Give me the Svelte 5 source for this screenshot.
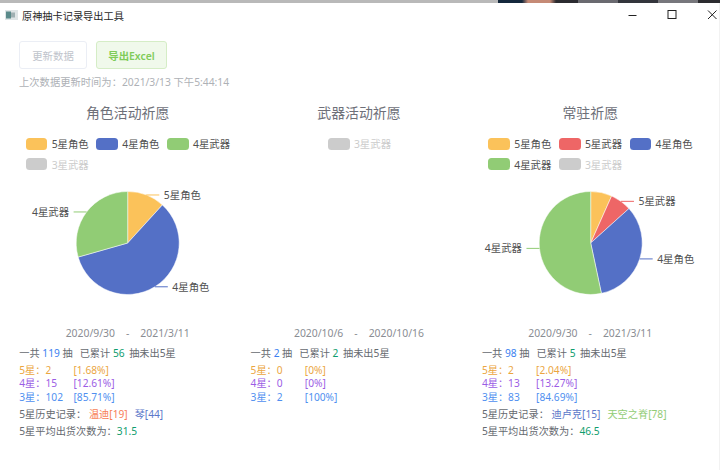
<script>
  const YELLOW = "#fbc25a";
  const RED = "#ee6666";
  const BLUE = "#5470c6";
  const GREEN = "#91cc75";
  const GRAY = "#cccccc";

  const CX = 115.7;
  const CY = 68;
  const R = 51.5;

  const point = (deg, r = R) => {
    const a = (deg * Math.PI) / 180;
    return [CX + r * Math.sin(a), CY - r * Math.cos(a)];
  };

  // turn counts into pie wedges + labels
  const slices = (items) => {
    const total = items.reduce((sum, i) => sum + i.value, 0);
    let from = 0;
    return items.map((item) => {
      const to = from + (item.value / total) * 360;
      const [x1, y1] = point(from);
      const [x2, y2] = point(to);
      const [ex, ey] = point((from + to) / 2);
      const dir = ex >= CX ? 1 : -1;
      const large = to - from > 180 ? 1 : 0;
      from = to;
      return {
        ...item,
        d: `M${CX} ${CY}L${x1} ${y1}A${R} ${R} 0 ${large} 1 ${x2} ${y2}Z`,
        line: `M${ex} ${ey}H${ex + dir * 13}`,
        tx: ex + dir * 17.5,
        ty: ey,
        anchor: dir > 0 ? "start" : "end",
      };
    });
  };

  const pools = [
    {
      title: "角色活动祈愿",
      legend: [
        { name: "5星角色", color: YELLOW },
        { name: "4星角色", color: BLUE },
        { name: "4星武器", color: GREEN },
        { name: "3星武器", color: GRAY, off: true },
      ],
      pie: slices([
        { name: "5星角色", value: 2, color: YELLOW, label: true },
        { name: "4星角色", value: 10, color: BLUE, label: true },
        { name: "4星武器", value: 5, color: GREEN, label: true },
      ]),
      from: "2020/9/30",
      to: "2021/3/11",
      total: 119,
      since: 56,
      rows: [
        ["5星", 2, "1.68%"],
        ["4星", 15, "12.61%"],
        ["3星", 102, "85.71%"],
      ],
      history: [
        { text: "温迪[19]", color: "#f77e56" },
        { text: "琴[44]", color: "#5b77c9" },
      ],
      avg: "31.5",
    },
    {
      title: "武器活动祈愿",
      legend: [{ name: "3星武器", color: GRAY, off: true }],
      pie: [],
      from: "2020/10/6",
      to: "2020/10/16",
      total: 2,
      since: 2,
      rows: [
        ["5星", 0, "0%"],
        ["4星", 0, "0%"],
        ["3星", 2, "100%"],
      ],
      history: [],
      avg: null,
    },
    {
      title: "常驻祈愿",
      legend: [
        { name: "5星角色", color: YELLOW },
        { name: "5星武器", color: RED },
        { name: "4星角色", color: BLUE },
        { name: "4星武器", color: GREEN },
        { name: "3星武器", color: GRAY, off: true },
      ],
      pie: slices([
        { name: "5星角色", value: 1, color: YELLOW },
        { name: "5星武器", value: 1, color: RED, label: true },
        { name: "4星角色", value: 5, color: BLUE, label: true },
        { name: "4星武器", value: 8, color: GREEN, label: true },
      ]),
      from: "2020/9/30",
      to: "2021/3/11",
      total: 98,
      since: 5,
      rows: [
        ["5星", 2, "2.04%"],
        ["4星", 13, "13.27%"],
        ["3星", 83, "84.69%"],
      ],
      history: [
        { text: "迪卢克[15]", color: "#5b77c9" },
        { text: "天空之脊[78]", color: "#91cc75" },
      ],
      avg: "46.5",
    },
  ];
</script>

<div class="strip"><span class="strip-grey"></span><span class="strip-photo"></span></div>

<div class="window">
  <header class="titlebar">
    <svg class="app-icon" width="13" height="10" viewBox="0 0 13 10">
      <rect width="13" height="10" fill="#dfe5e6" />
      <rect x="1" y="1.5" width="5" height="7" fill="#5a8a8a" />
      <rect x="6" y="2.5" width="4" height="5" fill="#9fb0b2" />
    </svg>
    <span class="app-title">原神抽卡记录导出工具</span>
    <div class="controls">
      <svg width="10" height="10" viewBox="0 0 10 10"><path d="M1.5 5.5H9.5" stroke="#222" /></svg>
      <svg width="10" height="10" viewBox="0 0 10 10"><rect x="1" y="0.5" width="8" height="8" fill="none" stroke="#222" /></svg>
      <svg width="10" height="10" viewBox="0 0 10 10"><path d="M1 0.5L9.5 9M9.5 0.5L1 9" stroke="#222" /></svg>
    </div>
  </header>

  <main>
    <div class="top">
      <div class="toolbar">
        <button class="btn" disabled>更新数据</button>
        <button class="btn success">导出Excel</button>
      </div>
      <p class="updated">上次数据更新时间为：2021/3/13 下午5:44:14</p>
    </div>

    <div class="pools">
      {#each pools as pool}
        <section class="pool">
          <h2>{pool.title}</h2>
          <ul class="legend">
            {#each pool.legend as item}
              <li class:off={item.off}>
                <i style="background: {item.color}"></i>{item.name}
              </li>
            {/each}
          </ul>

          <svg class="chart" width="231" height="150" viewBox="0 0 231 150">
            {#each pool.pie as s}
              <path d={s.d} fill={s.color} stroke="#fff" stroke-width="0.5" />
            {/each}
            {#each pool.pie.filter((s) => s.label) as s}
              <path d={s.line} fill="none" stroke={s.color} />
              <text x={s.tx} y={s.ty} text-anchor={s.anchor} dominant-baseline="central">{s.name}</text>
            {/each}
          </svg>

          <div class="range"><span>{pool.from}</span><span>-</span><span>{pool.to}</span></div>

          <div class="stats">
            <p class="summary">
              一共 <b class="blue">{pool.total}</b> 抽<span class="later">已累计</span>
              <b class="green since">{pool.since}</b> 抽未出5星
            </p>
            <div class="rows">
              {#each pool.rows as [star, count, pct], i}
                <div class="row r{i}">
                  <span class="count">{star}：{count}</span><span>[{pct}]</span>
                </div>
              {/each}
            </div>
            {#if pool.history.length}
              <p class="history">
                5星历史记录：
                {#each pool.history as h}
                  <span style="color: {h.color}">{h.text}</span>
                {/each}
              </p>
            {/if}
            {#if pool.avg}
              <p class="avg">5星平均出货次数为：<b class="green">{pool.avg}</b></p>
            {/if}
          </div>
        </section>
      {/each}
    </div>
  </main>
</div>

<style>
  :global(body) {
    margin: 0;
    background: #fff;
    font-family: "Noto Sans", "Noto Sans CJK SC", sans-serif;
    font-size: 10.4px;
    color: #666a70;
  }

  p,
  h2,
  ul {
    margin: 0;
    padding: 0;
  }

  b {
    font-weight: 400;
  }

  .strip {
    display: flex;
    height: 3px;
  }

  .strip-grey {
    width: 498px;
    background: #b9b9b9;
  }

  .strip-photo {
    flex: 1;
    background: linear-gradient(
      90deg,
      #14283c 0 24px,
      #c58a76 30px 52px,
      #2b2b30 58px 80px,
      #6a6a70 80px 120px,
      #33353c 120px 160px,
      #77777c 160px 200px,
      #2c2c30 200px
    );
  }

  .window {
    height: 467px;
    box-sizing: border-box;
    border-right: 1px solid #f2f2f2;
    background: #fff;
  }

  .titlebar {
    display: flex;
    align-items: center;
    height: 24px;
    padding: 0 2px 0 5px;
    color: #1f1f1f;
  }

  .app-icon {
    margin-right: 4px;
  }

  .app-title {
    font-size: 10.2px;
  }

  .controls {
    display: flex;
    gap: 30px;
    margin-left: auto;
  }

  .top {
    padding: 14px 19px 0;
  }

  .toolbar {
    display: flex;
    gap: 9px;
  }

  .btn {
    height: 28px;
    padding: 0;
    width: 68px;
    border: 1px solid #ebeef5;
    border-radius: 3px;
    background: #fff;
    color: #c0c4cc;
    font: inherit;
  }

  .btn.success {
    width: 71px;
    border-color: #d5edc6;
    background: #f0f9eb;
    color: #80cc5a;
    font-weight: 600;
  }

  .updated {
    margin-top: 6px;
    line-height: 14px;
    font-size: 10.3px;
    color: #aeb1b6;
  }

  .pools {
    display: grid;
    grid-template-columns: repeat(3, 231.3px);
    padding-left: 12px;
  }

  .pool h2 {
    margin-top: 14px;
    line-height: 20px;
    text-align: center;
    font-size: 13.9px;
    font-weight: 400;
    color: #6e7079;
  }

  .legend {
    display: flex;
    flex-wrap: wrap;
    gap: 8.5px 8.7px;
    width: fit-content;
    max-width: 204px;
    min-height: 33px;
    margin: 14.5px auto 0;
    list-style: none;
  }

  .legend li {
    display: flex;
    align-items: center;
    height: 12.2px;
    width: 62px;
    white-space: nowrap;
    color: #505050;
  }

  .legend li.off {
    color: #cccccc;
  }

  .legend i {
    flex: none;
    width: 21.7px;
    height: 12.2px;
    margin-right: 4.3px;
    border-radius: 3.5px;
  }

  .chart {
    display: block;
    margin-top: 4.5px;
    overflow: visible;
  }

  .chart text {
    font-size: 10.4px;
    fill: #505050;
  }

  .range {
    display: flex;
    justify-content: center;
    gap: 11px;
    line-height: 16px;
    color: #8a8d93;
  }

  .stats {
    padding-left: 7.3px;
    font-size: 10.2px;
  }

  .summary {
    margin-top: 4px;
    line-height: 16px;
    white-space: pre-wrap;
  }

  .later {
    margin-left: 7px;
  }

  .since {
    margin-right: 2px;
  }

  .blue {
    color: #3b7ff0;
  }

  .green {
    color: #0f9d6e;
  }

  .rows {
    margin-top: 2.5px;
  }

  .row {
    line-height: 13.5px;
  }

  .r0 {
    color: #eba63f;
  }

  .r1 {
    color: #9b5de5;
  }

  .r2 {
    color: #4f8ff0;
  }

  .count {
    display: inline-block;
    width: 54.2px;
  }

  .history {
    margin-top: 2px;
    line-height: 16px;
  }

  .history span {
    margin-right: 7px;
  }

  .avg {
    margin-top: 1px;
    line-height: 16px;
  }
</style>
